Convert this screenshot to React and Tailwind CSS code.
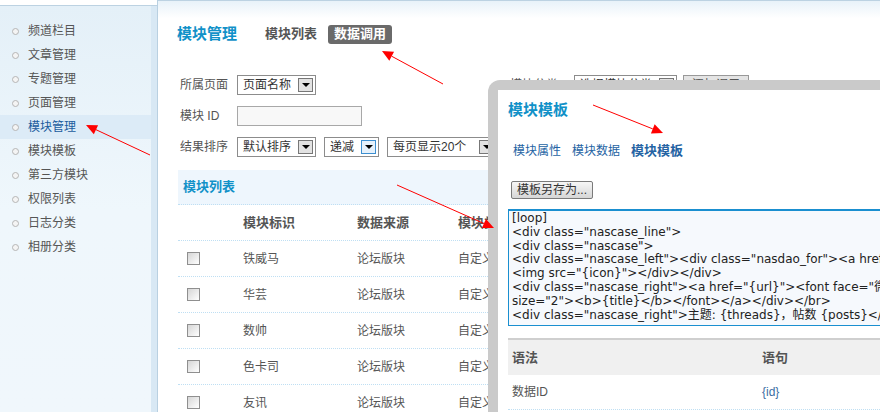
import React from "react";

const CJK = "font-['Liberation_Sans','Noto_Sans_CJK_SC',sans-serif]";

const navItems = ["频道栏目", "文章管理", "专题管理", "页面管理", "模块管理", "模块模板", "第三方模块", "权限列表", "日志分类", "相册分类"];

const rows = ["铁威马", "华芸", "数帅", "色卡司", "友讯"];

const codeLines = [
  "[loop]",
  '<div class="nascase_line">',
  '<div class="nascase">',
  '<div class="nascase_left"><div class="nasdao_for"><a href="{url}">',
  '<img src="{icon}"></div></div>',
  '<div class="nascase_right"><a href="{url}"><font face="微软雅黑"',
  'size="2"><b>{title}</b></font></a></div></br>',
  '<div class="nascase_right">主题: {threads}，帖数 {posts}</div>',
];

// little select box with the grey arrow button
const Select = ({ label, w, focus }) => (
  <div className={`flex items-center justify-between h-[20px] border border-[#8c8c8c] bg-white pl-[5px] pr-[2px] ${w}`}>
    <span className="text-[12px] text-[#333] whitespace-nowrap">{label}</span>
    <span className={`w-[15px] h-[14px] flex items-center justify-center border ${focus ? "border-[#3d8fd0] bg-[#e6f1fb]" : "border-[#777] bg-[#e2e2e2]"}`}>
      <span className="w-0 h-0 border-l-[4px] border-r-[4px] border-t-[4px] border-l-transparent border-r-transparent border-t-black" />
    </span>
  </div>
);

const Checkbox = () => (
  <span className="block w-[13px] h-[13px] border border-[#8f8f8f] bg-linear-to-br from-[#d6d6d6] to-white" />
);

const Arrow = ({ x1, y1, x2, y2 }) => {
  const a = Math.atan2(y2 - y1, x2 - x1);
  const len = 11, half = 5;
  const bx = x2 - len * Math.cos(a), by = y2 - len * Math.sin(a);
  const px = -Math.sin(a) * half, py = Math.cos(a) * half;
  return (
    <g>
      <line x1={x1} y1={y1} x2={bx} y2={by} stroke="#ff0000" strokeWidth="1" />
      <polygon points={`${x2},${y2} ${bx + px},${by + py} ${bx - px},${by - py}`} fill="#ff0000" />
    </g>
  );
};

export default function App() {
  return (
    <div className={`relative w-[880px] h-[412px] overflow-hidden bg-white ${CJK} text-[#555]`}>
      <div className="flex h-full">
        {/* sidebar */}
        <div className="w-[158px] h-full flex flex-col border-r border-[#b9d0e1]">
          <div className="h-[6px] bg-white border-b border-[#bcd2e2]" />
          <div className="flex-1 flex bg-[#d8e8f4]">
            <div className="w-[151px] bg-linear-to-b from-[#e4f0f8] via-[#eff7fc] to-[#f0f7fc] pt-[13px]">
              {navItems.map((t) => {
                const on = t === "模块管理";
                return (
                  <div key={t} className={`h-[24px] flex items-center pl-[12px] gap-[9px] ${on ? "bg-[#dcebf7]" : ""}`}>
                    <span className="w-[7px] h-[7px] rounded-full border border-[#b5b5b5] bg-[#f4f4f4]" />
                    <span className={`text-[12px] ${on ? "text-[#1a5c9e]" : "text-[#555]"}`}>{t}</span>
                  </div>
                );
              })}
            </div>
          </div>
        </div>

        {/* main */}
        <div className="flex-1 flex flex-col">
          <div className="h-[6px] bg-[#f6f9fc] border-b border-[#bcd2e2]" />
          <div className="bg-linear-to-b from-[#e8f2f9] to-white to-[40%] pl-[19px] pt-[23px] flex items-center h-[43px]">
            <span className="text-[15px] font-bold text-[#1191c8]">模块管理</span>
            <span className="ml-[28px] text-[13px] font-bold text-[#555]">模块列表</span>
            <span className="ml-[11px] h-[19px] px-[6px] rounded-[3px] bg-[#6a6a6a] text-white text-[13px] font-bold flex items-center">数据调用</span>
          </div>

          {/* filter form */}
          <div className="mt-[25px] pl-[22px] text-[12px]">
            <div className="h-[31px] flex items-center">
              <span className="w-[57px]">所属页面</span>
              <Select label="页面名称" w="w-[79px]" />
              <span className="ml-[194px] w-[64px]">模块分类</span>
              <Select label="选择模块分类" w="w-[103px]" />
              <span className="ml-[6px] h-[19px] px-[8px] border border-[#999] bg-[#e4e4e4] flex items-center">添加调用</span>
            </div>
            <div className="h-[31px] flex items-center">
              <span className="w-[57px]">模块 ID</span>
              <span className="w-[125px] h-[20px] border border-[#a8a8a8] bg-[#f8f8f8]" />
            </div>
            <div className="h-[31px] flex items-center gap-[8px]">
              <span className="w-[49px]">结果排序</span>
              <Select label="默认排序" w="w-[79px]" />
              <Select label="递减" w="w-[55px]" focus />
              <Select label="每页显示20个" w="w-[110px]" />
            </div>
          </div>

          {/* module list */}
          <div className="ml-[20px] mt-[8px]">
            <div className="h-[35px] bg-[#eef6fd] border-b border-dotted border-[#bfdff3] flex items-center pl-[5px]">
              <span className="text-[13px] font-bold text-[#1191c8]">模块列表</span>
            </div>
            <div className="h-[36px] flex items-center border-b border-dotted border-[#bfdff3] text-[13px] font-bold text-[#555]">
              <span className="w-[65px]" />
              <span className="w-[114px]">模块标识</span>
              <span className="w-[101px]">数据来源</span>
              <span>模块类型</span>
            </div>
            {rows.map((r) => (
              <div key={r} className="h-[36px] flex items-center border-b border-dotted border-[#bfdff3] text-[12px] text-[#555]">
                <span className="w-[65px] pl-[9px]"><Checkbox /></span>
                <span className="w-[114px]">{r}</span>
                <span className="w-[101px]">论坛版块</span>
                <span>自定义</span>
              </div>
            ))}
          </div>
        </div>
      </div>

      {/* dialog */}
      <div className="absolute left-[488px] top-[80px] right-0 bottom-0 bg-[#cacaca] rounded-tl-[12px] pl-[10px] pt-[10px]">
        <div className="h-full bg-white">
          <div className="pt-[10px] pl-[10px] h-[30px] flex items-center">
            <span className="text-[15px] font-bold text-[#1191c8]">模块模板</span>
          </div>
          <div className="mt-[21px] pl-[15px] h-[20px] flex items-center text-[12px] text-[#2563a3]">
            <span>模块属性</span>
            <span className="ml-[11px]">模块数据</span>
            <span className="ml-[11px] text-[13px] font-bold">模块模板</span>
          </div>
          <div className="mt-[16px] pl-[13px] h-[18px]">
            <span className="inline-flex items-center h-[18px] px-[5px] border border-[#7a7a7a] rounded-[2px] bg-linear-to-b from-[#f6f6f6] to-[#d6d6d6] text-[12px] text-[#333]">模板另存为...</span>
          </div>
          <div className="mt-[14px] ml-[10px] h-[117px] border border-t-2 border-[#1a8fd0] border-r-0 bg-[#f6f9fd] pl-[3px] pt-[1px] overflow-hidden">
            {codeLines.map((l, i) => (
              <div key={i} className="whitespace-pre text-[12px] leading-[13.8px] text-[#222] font-['DejaVu_Sans','Noto_Sans_CJK_SC',sans-serif]">{l}</div>
            ))}
          </div>
          <div className="mt-[12px] ml-[10px]">
            <div className="h-[37px] bg-[#f0f0f0] border-t-2 border-[#cfcfcf] flex items-center text-[13px] font-bold text-[#555]">
              <span className="w-[254px] pl-[4px]">语法</span>
              <span>语句</span>
            </div>
            <div className="h-[35px] flex items-center border-b border-dotted border-[#bfdff3] text-[12px]">
              <span className="w-[254px] pl-[4px] text-[#555]">数据ID</span>
              <span className="text-[#3c6ea3]">{"{id}"}</span>
            </div>
          </div>
        </div>
      </div>

      {/* annotation arrows */}
      <svg className="absolute inset-0 pointer-events-none" width="880" height="412">
        <Arrow x1={150} y1={155} x2={86} y2={125} />
        <Arrow x1={443} y1={84} x2={382} y2={51} />
        <Arrow x1={593} y1={105} x2={663} y2={133} />
        <Arrow x1={397} y1={185} x2={494} y2={228} />
      </svg>
    </div>
  );
}
